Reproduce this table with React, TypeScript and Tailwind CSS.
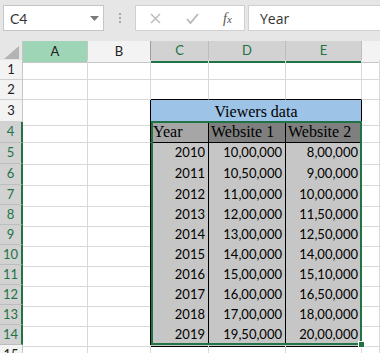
import React from 'react'

const cols = ["A", "B", "C", "D", "E"]

const data = [
  ["2010", "10,00,000", "8,00,000"],
  ["2011", "10,50,000", "9,00,000"],
  ["2012", "11,00,000", "10,00,000"],
  ["2013", "12,00,000", "11,50,000"],
  ["2014", "13,00,000", "12,50,000"],
  ["2015", "14,00,000", "14,00,000"],
  ["2016", "15,00,000", "15,10,000"],
  ["2017", "16,00,000", "16,50,000"],
  ["2018", "17,00,000", "18,00,000"],
  ["2019", "19,50,000", "20,00,000"],
]

const gridCols = "grid grid-cols-[23px_65px_63px_58px_77px_76px_1fr]"
const sans = "font-['Lato','Liberation_Sans',sans-serif]"
const serif = "font-['Liberation_Serif',serif]"

const RowHead = ({ n, sel, h }: { n: number; sel?: boolean; h: string }) => (
  <div
    className={`${h} flex items-center justify-center text-[13px] border-b ${sans} ${
      sel
        ? "bg-[#d2d2d2] text-[#217346] border-b-[#bdbdbd] border-r-2 border-r-[#217346]"
        : "bg-[#f3f3f3] text-[#222] border-b-[#d0d0d0] border-r border-r-[#c6c6c6]"
    }`}
  >
    {n}
  </div>
)

const Empty = ({ dark }: { dark?: boolean }) => (
  <div className={`border-b border-r border-b-[#d9d9d9] ${dark ? "border-r-black" : "border-r-[#d9d9d9]"}`} />
)

const App = () => {
  return (
    <div className="w-[380px] h-[353px] overflow-hidden bg-white select-none">
      {/* formula bar */}
      <div className="h-[41px] bg-[#e6e6e6] flex items-start pt-[5px] pl-[3px]">
        <div className="w-[101px] h-[26px] bg-white border border-[#c6c6c6] flex items-center justify-between pl-[6px] pr-[4px]">
          <span className={`text-[14px] text-[#333] ${sans}`}>C4</span>
          <svg width="9" height="5" viewBox="0 0 9 5"><path d="M0 0h9L4.5 5z" fill="#7a7a7a" /></svg>
        </div>
        <div className="w-[31px] h-[26px] flex flex-col items-center justify-center gap-[2px]">
          <span className="w-[2px] h-[2px] bg-[#a8a8a8]" />
          <span className="w-[2px] h-[2px] bg-[#a8a8a8]" />
          <span className="w-[2px] h-[2px] bg-[#a8a8a8]" />
        </div>
        <div className="w-[110px] h-[26px] bg-white border border-[#d0d0d0] flex items-center">
          <svg className="ml-[14px]" width="11" height="11" viewBox="0 0 11 11">
            <path d="M1 1l9 9M10 1l-9 9" stroke="#b8b8b8" strokeWidth="1.4" />
          </svg>
          <svg className="ml-[25px]" width="13" height="11" viewBox="0 0 13 11">
            <path d="M1 6l3.5 4L12 1" stroke="#b8b8b8" strokeWidth="1.8" fill="none" />
          </svg>
          <span className={`ml-[24px] text-[14px] italic text-[#555] ${serif}`}>f<span className="text-[11px]">x</span></span>
        </div>
        <div className="ml-[3px] flex-1 h-[26px] bg-white border border-r-0 border-[#d0d0d0] flex items-center pl-[11px]">
          <span className="text-[14px] text-[#333] font-['Open_Sans',sans-serif]">Year</span>
        </div>
      </div>

      <div className="relative">
        {/* column headers */}
        <div className={`${gridCols} h-[19px] text-[13px] ${sans}`}>
          <div className="bg-[#e6e6e6] border-r border-b border-[#c6c6c6] flex items-end justify-end pr-[3px] pb-[3px]">
            <svg width="15" height="13" viewBox="0 0 15 13"><path d="M15 0v13H0z" fill="#b4b4b4" /></svg>
          </div>
          {cols.map((c) => {
            const sel = c === "C" || c === "D" || c === "E"
            const cls =
              c === "A"
                ? "bg-[#9fd5b7] text-[#222] border-b border-b-[#c6c6c6] border-r border-r-[#c6c6c6]"
                : sel
                ? "bg-[#d2d2d2] text-[#217346] border-b-2 border-b-[#217346] border-r border-r-[#bdbdbd]"
                : "bg-[#f3f3f3] text-[#222] border-b border-b-[#c6c6c6] border-r border-r-[#9e9e9e]"
            return (
              <div key={c} className={`${cls} flex items-center justify-center`}>
                {c}
              </div>
            )
          })}
          <div className="bg-[#f3f3f3] border-b border-[#c6c6c6]" />
        </div>

        {/* rows 1-2 */}
        {[1, 2].map((n) => (
          <div key={n} className={`${gridCols} h-[20px]`}>
            <RowHead n={n} h="h-[20px]" />
            <Empty />
            <Empty />
            <div className={`border-r border-r-[#d9d9d9] border-b ${n === 2 ? "border-b-black" : "border-b-[#d9d9d9]"}`} />
            <div className={`border-r border-r-[#d9d9d9] border-b ${n === 2 ? "border-b-black" : "border-b-[#d9d9d9]"}`} />
            <div className={`border-r border-r-[#d9d9d9] border-b ${n === 2 ? "border-b-black" : "border-b-[#d9d9d9]"}`} />
            <Empty />
          </div>
        ))}

        {/* row 3 */}
        <div className={`${gridCols} h-[22px]`}>
          <RowHead n={3} h="h-[22px]" />
          <Empty />
          <Empty dark />
          <div className={`col-span-3 bg-[#9dc3e6] border-r border-b border-black flex items-end justify-center pb-[1px] text-[16px] text-black ${serif}`}>
            Viewers data
          </div>
          <Empty />
        </div>

        {/* row 4 */}
        <div className={`${gridCols} h-[21px]`}>
          <RowHead n={4} sel h="h-[21px]" />
          <Empty />
          <Empty dark />
          <div className={`bg-[#a6a6a6] border-r border-b border-black flex items-end pl-[2px] text-[16px] leading-[20px] text-black ${serif}`}>Year</div>
          <div className={`bg-[#7f7f7f] border-r border-b border-black flex items-end pl-[2px] text-[16px] leading-[20px] text-black ${serif}`}>Website 1</div>
          <div className={`bg-[#7f7f7f] border-r border-b border-black flex items-end pl-[2px] text-[16px] leading-[20px] text-black ${serif}`}>Website 2</div>
          <Empty />
        </div>

        {/* data rows 5-14 */}
        {data.map((r, i) => {
          const h = i < 2 ? "h-[21px]" : "h-[20px]"
          return (
            <div key={r[0]} className={`${gridCols} ${h}`}>
              <RowHead n={i + 5} sel h={h} />
              <Empty />
              <Empty dark />
              {r.map((v, j) => (
                <div
                  key={j}
                  className={`bg-[#c6c6c6] border-r border-b border-black flex items-end justify-end pr-[3px] pb-[1px] text-[13px] text-black ${sans}`}
                >
                  {v}
                </div>
              ))}
              <Empty />
            </div>
          )
        })}

        {/* row 15 */}
        <div className={`${gridCols} h-[20px]`}>
          <RowHead n={15} h="h-[20px]" />
          <Empty />
          <Empty />
          <Empty />
          <Empty />
          <Empty />
          <Empty />
        </div>

        {/* selection outline */}
        <div className="absolute left-[151px] top-[80px] w-[211px] h-[224px] border-2 border-[#217346] pointer-events-none">
          <div className="absolute -right-[5px] -bottom-[5px] w-[7px] h-[7px] bg-[#217346] border border-white" />
        </div>
      </div>
    </div>
  )
}

export default App
